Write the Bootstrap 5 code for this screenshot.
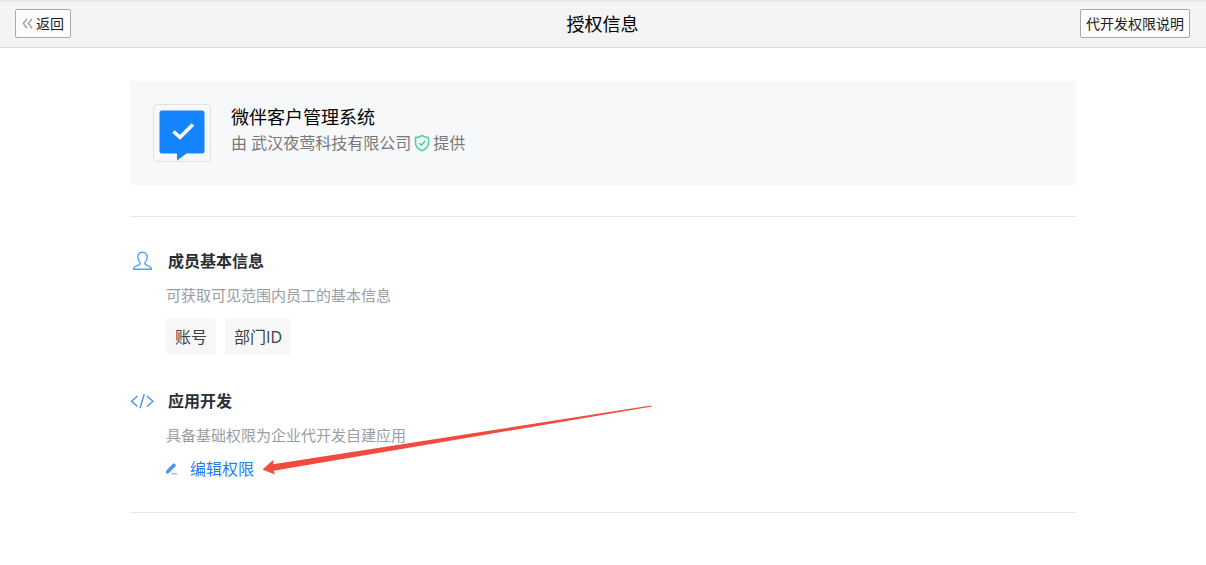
<!DOCTYPE html>
<html lang="zh-CN">
<head>
<meta charset="utf-8">
<meta name="viewport" content="width=device-width, initial-scale=1">
<title>授权信息</title>
<link href="https://cdn.jsdelivr.net/npm/bootstrap@5.3.0/dist/css/bootstrap.min.css" rel="stylesheet">
<style>
body { font-family: "Open Sans", "Noto Sans CJK SC", sans-serif; font-size: 16px; line-height: 24px; color: #000; }
.topbar { height: 48px; padding: 0 16px 2px 15px; background: #f4f4f4; border-top: 2px solid #e9e9e9; border-bottom: 1px solid #dcdcdc; }
.topbar h1 { font-size: 18px; line-height: 24px; font-weight: 400; }
.btn-bar { --bs-btn-padding-x: 6px; --bs-btn-padding-y: 3px; --bs-btn-font-size: 14px; --bs-btn-line-height: 21px; --bs-btn-border-radius: 2px; --bs-btn-color: #222; --bs-btn-border-color: #a9a9a9; --bs-btn-bg: #fcfcfc; --bs-btn-hover-bg: #f4f4f4; --bs-btn-hover-border-color: #999; }
.btn-back { gap: 3px; }
.btn-desc { --bs-btn-padding-x: 5px; }
.page-body { max-width: 946px; padding-top: 33px; }
.provider { padding: 23px; gap: 20px; background: #f7f8fa; }
.app-logo { width: 58px; height: 58px; border: 1px solid #dfe1e4; border-radius: 4px; }
.provider h2 { font-size: 18px; line-height: 26px; font-weight: 400; }
.provider p { line-height: 26px; gap: 3px; color: #787878; }
.rule { margin: 31px 0 32px; border-top: 1px solid #e4e6e9; }
.perm { display: grid; grid-template-columns: 24px 1fr; column-gap: 12px; }
.perm + .perm { margin-top: 34px; }
.perm h3 { font-size: 16px; line-height: 24px; font-weight: 700; color: #2b2f36; padding-left: 2px; margin-bottom: 11px; }
.perm-text { font-size: 15px; line-height: 22px; color: #9a9da3; }
.perm-tags { margin-top: 12px; gap: 9px; }
.perm-tag { padding: 7px 9px 6px; line-height: 24px; border-radius: 4px; background: #f7f7f7; color: #3c4046; }
.perm-action { margin-top: 11px; }
.edit-link { color: #267ef0; }
.pointer { position: absolute; left: 100%; top: -52px; margin-left: 8px; pointer-events: none; }
</style>
</head>
<body>
<header class="topbar row g-0 align-items-center">
  <div class="col"><button type="button" class="btn btn-bar btn-back d-inline-flex align-items-center"><svg width="11" height="11" viewBox="0 0 11 11" fill="none" stroke="#a2a2a2" stroke-width="1.4" aria-hidden="true"><path d="M5 .8 1.3 5.5 5 10.2M10 .8 6.3 5.5 10 10.2"/></svg>返回</button></div>
  <h1 class="col-auto mb-0">授权信息</h1>
  <div class="col text-end"><button type="button" class="btn btn-bar btn-desc">代开发权限说明</button></div>
</header>
<main class="page-body mx-auto">
  <section class="provider d-flex align-items-start">
    <svg class="app-logo flex-shrink-0" viewBox="0 0 56 56" role="img" aria-label="微伴"><path fill="#1485ff" d="M8 5.500h40q2.500 0 2.500 2.500v38q0 2.500-2.500 2.500H32.500L23 55.500v-7H8q-2.500 0-2.500-2.500V8Q5.500 5.500 8 5.500Z"/><path d="m19.500 26.500 6.500 5.800L39 19.500" fill="none" stroke="#fff" stroke-width="3.600"/></svg>
    <div>
      <h2 class="mb-0">微伴客户管理系统</h2>
      <p class="mb-0 d-flex align-items-center"><span>由 武汉夜莺科技有限公司</span><svg width="16" height="18" viewBox="0 0 16 18" fill="none" stroke="#4fd39b" stroke-width="1.600" stroke-linejoin="round" aria-hidden="true"><path d="M8 1.500C6 3 3.800 3.500 1.500 3.600v5.200c0 3.800 2.600 6.300 6.500 7.900 3.900-1.600 6.500-4.100 6.500-7.900V3.600C12.200 3.500 10 3 8 1.500Z"/><path d="m4.900 9 2.400 2.200 4-4.300"/></svg><span>提供</span></p>
    </div>
  </section>
  <div class="rule"></div>
  <section class="perm">
    <svg width="24" height="24" viewBox="0 0 24 24" fill="none" stroke="#5a9ff5" stroke-width="1.400" stroke-linejoin="round" aria-hidden="true"><path d="M12.500 3.200c-3 0-4.700 2.100-4.700 4.900 0 2.300.9 4.300 2.300 5.400.3 1.600-.3 2.200-1.500 2.600-2.500.9-5.100 1.500-5.100 4.200h18c0-2.700-2.600-3.300-5.100-4.200-1.200-.4-1.800-1-1.500-2.600 1.400-1.100 2.300-3.100 2.300-5.400 0-2.800-1.700-4.900-4.700-4.900Z"/></svg>
    <div>
      <h3>成员基本信息</h3>
      <p class="perm-text mb-0">可获取可见范围内员工的基本信息</p>
      <div class="perm-tags d-flex"><span class="perm-tag">账号</span><span class="perm-tag">部门ID</span></div>
    </div>
  </section>
  <section class="perm">
    <svg width="24" height="24" viewBox="0 0 24 24" fill="none" stroke="#4a93ee" stroke-width="1.400" aria-hidden="true"><path d="M7.500 7 1.500 12.200l6 5.300M17 7l6 5.200-6 5.300M14.300 5 10 19.300"/></svg>
    <div>
      <h3>应用开发</h3>
      <p class="perm-text mb-0">具备基础权限为企业代开发自建应用</p>
      <div class="perm-action d-flex"><a href="#" class="edit-link position-relative d-inline-flex align-items-center text-decoration-none"><svg class="me-2" width="16" height="16" viewBox="0 0 16 16" aria-hidden="true"><path fill="#4d94f0" d="M-.5 13 .3 9.500 7 2.700q.8-.7 1.600 0l1 1q.7.7 0 1.500L3 12Z"/><path d="M5.500 12.700H11" stroke="#8dbcf6" stroke-width="1.300"/></svg>编辑权限<svg class="pointer" width="392" height="72" viewBox="0 0 392 72" aria-hidden="true"><path fill="#f04b3e" d="M.5 64.500 11.500 54.800 11 59.200 389 .6 390 1.600 138 44.200 11.500 65.800 13 69.500Z"/></svg></a></div>
    </div>
  </section>
  <div class="rule"></div>
</main>
<script src="https://cdn.jsdelivr.net/npm/bootstrap@5.3.0/dist/js/bootstrap.bundle.min.js"></script>
</body>
</html>
